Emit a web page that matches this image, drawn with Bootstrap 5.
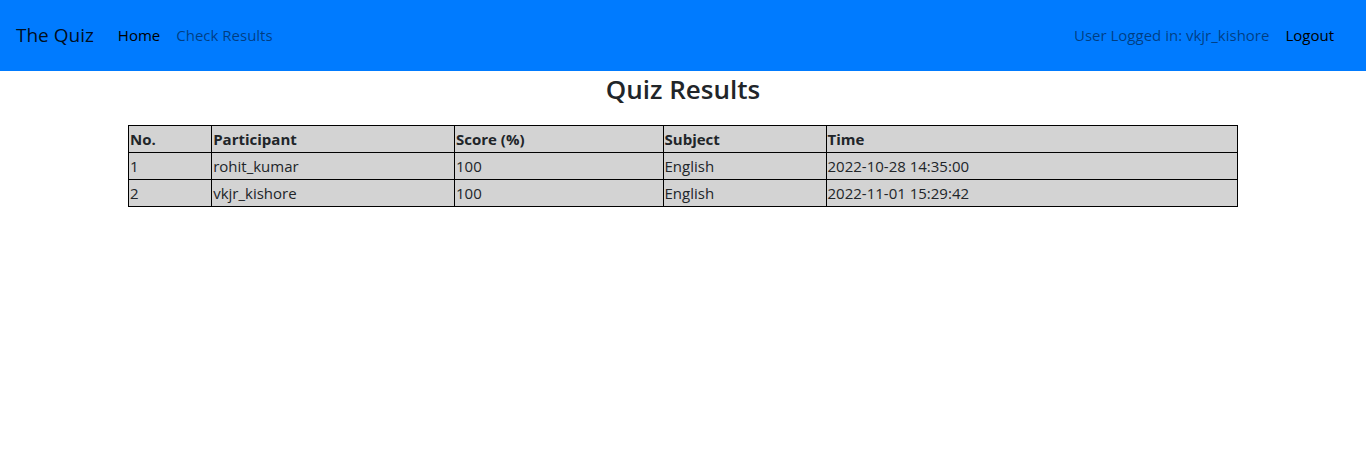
<!DOCTYPE html>
<html lang="en">
<head>
<meta charset="utf-8">
<meta name="viewport" content="width=device-width, initial-scale=1">
<title>The Quiz</title>
<link rel="stylesheet" href="https://cdn.jsdelivr.net/npm/bootstrap@5.3.0/dist/css/bootstrap.min.css">
<style>
body { font-family: "Open Sans", "Noto Sans", sans-serif; font-size: 15px; line-height: 24px; color: #212529; }
.quiz-bar { background: #007bff; padding: 15px 16px 16px; }
.quiz-bar .navbar-brand { font-size: 19px; line-height: 30px; margin-right: 16px; color: rgba(0,0,0,.9); }
.quiz-bar .nav-link, .quiz-bar .navbar-text { color: rgba(0,0,0,.5); }
.quiz-bar .nav-link.active { color: #000; }
.quiz-title { font-size: 26px; line-height: 36px; font-weight: 600; margin-bottom: 18px; }
.results { width: 1110px; max-width: 100%; background: #d3d3d3; border-collapse: collapse; table-layout: fixed; }
.results th, .results td { border: 1px solid #000; padding: 1px; height: 27px; }
</style>
</head>
<body>
<nav class="navbar navbar-expand quiz-bar">
  <a class="navbar-brand" href="#">The Quiz</a>
  <ul class="navbar-nav me-auto">
    <li class="nav-item"><a class="nav-link active" aria-current="page" href="#">Home</a></li>
    <li class="nav-item"><a class="nav-link" href="#">Check Results</a></li>
  </ul>
  <ul class="navbar-nav pe-2">
    <li class="nav-item"><span class="navbar-text d-block p-2">User Logged in: vkjr_kishore</span></li>
    <li class="nav-item"><a class="nav-link active" href="#">Logout</a></li>
  </ul>
</nav>
<main>
  <h1 class="quiz-title text-center">Quiz Results</h1>
  <table class="results mx-auto">
    <colgroup><col style="width:7.5%"><col style="width:21.9%"><col style="width:18.8%"><col style="width:14.7%"><col style="width:37.1%"></colgroup>
    <thead><tr><th scope="col">No.</th><th scope="col">Participant</th><th scope="col">Score (%)</th><th scope="col">Subject</th><th scope="col">Time</th></tr></thead>
    <tbody>
      <tr><td>1</td><td>rohit_kumar</td><td>100</td><td>English</td><td>2022-10-28 14:35:00</td></tr>
      <tr><td>2</td><td>vkjr_kishore</td><td>100</td><td>English</td><td>2022-11-01 15:29:42</td></tr>
    </tbody>
  </table>
</main>
<script src="https://cdn.jsdelivr.net/npm/bootstrap@5.3.0/dist/js/bootstrap.bundle.min.js"></script>
</body>
</html>
